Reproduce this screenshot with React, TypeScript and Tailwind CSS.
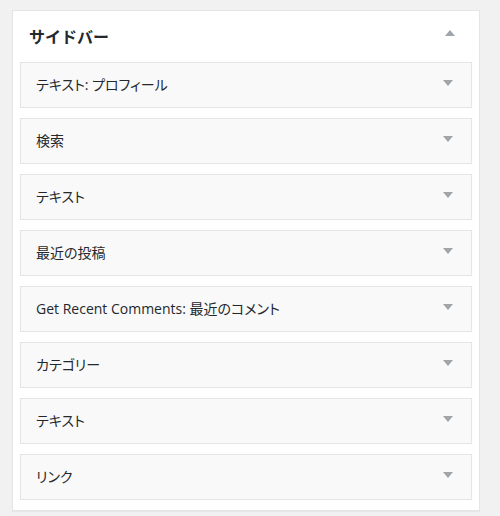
import React from "react";

const items = [
  "テキスト: プロフィール",
  "検索",
  "テキスト",
  "最近の投稿",
  "Get Recent Comments: 最近のコメント",
  "カテゴリー",
  "テキスト",
  "リンク",
];

function Down() {
  return (
    <svg width="10" height="7" viewBox="0 0 10 7" className="shrink-0 mb-[3px]">
      <path d="M0 0 L10 0 L5 6 Z" fill="#a0a5aa" />
    </svg>
  );
}
function Up() {
  return (
    <svg width="10" height="7" viewBox="0 0 10 7" className="shrink-0 mb-[6px]">
      <path d="M0 6 L10 6 L5 0 Z" fill="#a0a5aa" />
    </svg>
  );
}

export default function App() {
  return (
    <div
      className="w-[500px] h-[516px] bg-[#f1f1f1] pt-[10px] pl-[12px]"
      style={{ fontFamily: '"Open Sans", "Noto Sans CJK JP", sans-serif' }}
    >
      <div className="w-[468px] bg-white border border-[#e5e5e5] shadow-[0_1px_1px_rgba(0,0,0,0.04)] px-[7px] pb-[10px]">
        <div className="h-[51px] flex items-center justify-between pl-[9px] pr-[17px]">
          <span className="text-[16px] font-bold text-[#23282d] leading-none">サイドバー</span>
          <Up />
        </div>
        <div className="flex flex-col gap-[10px]">
          {items.map((t, i) => (
            <div
              key={i}
              className="h-[46px] border border-[#e5e5e5] bg-[#f9f9f9] flex items-center justify-between pl-[15px] pr-[18px]"
            >
              <span className="text-[14px] text-[#23282d] leading-none whitespace-pre [font-feature-settings:'palt']">
                {t}
              </span>
              <Down />
            </div>
          ))}
        </div>
      </div>
    </div>
  );
}
